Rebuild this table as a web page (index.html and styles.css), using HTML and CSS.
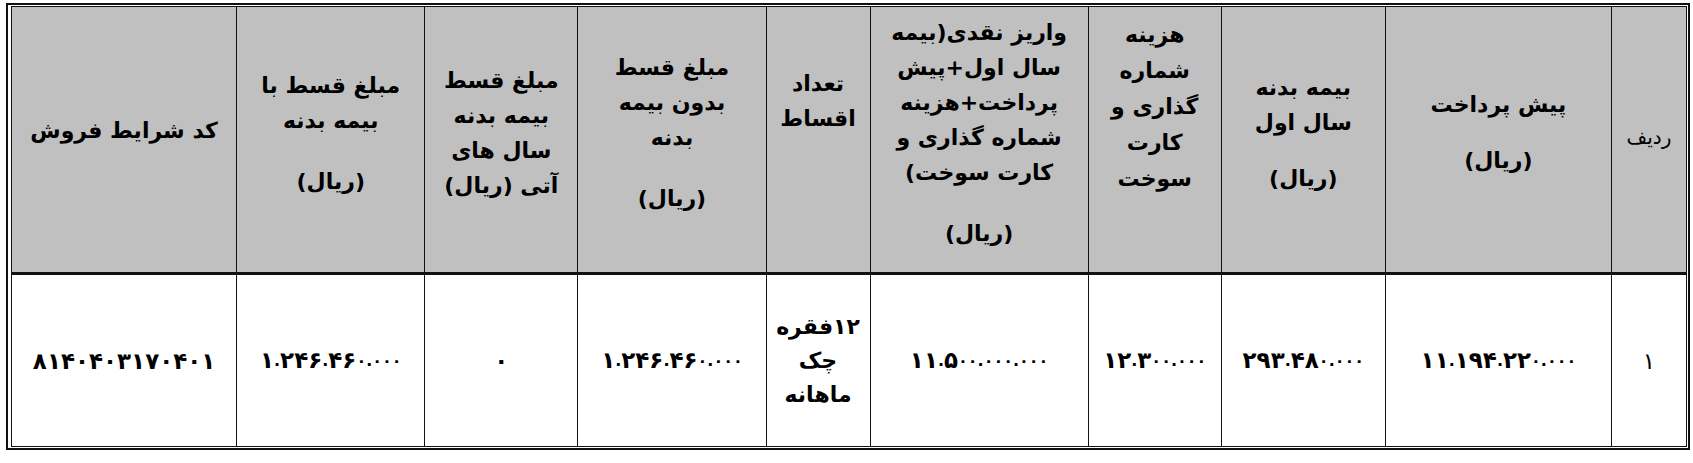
FILE: index.html
```html
<!DOCTYPE html>
<html lang="fa" dir="rtl">
<head>
<meta charset="utf-8">
<title>شرایط فروش</title>
<link rel="stylesheet" href="styles.css">
</head>
<body>
<div class="frame">
<table class="grid">
<colgroup>
<col class="w-radif"><col class="w-pish"><col class="w-bime"><col class="w-hazine"><col class="w-variz"><col class="w-tedad"><col class="w-bedun"><col class="w-ati"><col class="w-ba"><col class="w-kod">
</colgroup>
<tr class="head">
<td class="radif">ردیف</td>
<td class="pad-pish">پیش پرداخت<span class="unit unit-s">(ریال)</span></td>
<td>بیمه بدنه<br>سال اول<span class="unit unit-s">(ریال)</span></td>
<td class="pad-hazine">هزینه<br>شماره<br>گذاری و<br>کارت<br>سوخت</td>
<td>واریز نقدی(بیمه<br>سال اول+پیش<br>پرداخت+هزینه<br>شماره گذاری و<br>کارت سوخت)<span class="unit">(ریال)</span></td>
<td class="pad-tedad">تعداد<br>اقساط</td>
<td>مبلغ قسط<br>بدون بیمه<br>بدنه<span class="unit">(ریال)</span></td>
<td>مبلغ قسط<br>بیمه بدنه<br>سال های<br>آتی (ریال)</td>
<td>مبلغ قسط با<br>بیمه بدنه<span class="unit">(ریال)</span></td>
<td class="pad-kod">کد شرایط فروش</td>
</tr>
<tr class="body">
<td class="num-one">۱</td>
<td>۱۱<span class="n">.</span>۱۹۴<span class="n">.</span>۲۲<span class="n">۰.۰۰۰</span></td>
<td>۲۹۳<span class="n">.</span>۴۸<span class="n">۰.۰۰۰</span></td>
<td>۱۲<span class="n">.</span>۳<span class="n">۰۰.۰۰۰</span></td>
<td>۱۱<span class="n">.</span>۵<span class="n">۰۰.۰۰۰.۰۰۰</span></td>
<td class="multi">۱۲فقره<br>چک<br>ماهانه</td>
<td>۱<span class="n">.</span>۲۴۶<span class="n">.</span>۴۶<span class="n">۰.۰۰۰</span></td>
<td>۰</td>
<td>۱<span class="n">.</span>۲۴۶<span class="n">.</span>۴۶<span class="n">۰.۰۰۰</span></td>
<td>۸۱۴۰۴۰۳۱۷۰۴۰۱</td>
</tr>
</table>
</div>
</body>
</html>
```

FILE: styles.css
```css
html, body {
  margin: 0;
  padding: 0;
  background: #ffffff;
}
body {
  padding: 3px;
  font-family: "DejaVu Sans", sans-serif;
  color: #000;
}
.frame {
  width: 1678px;
  border: 2px solid #111;
  padding: 1px;
  background: #fff;
}
.grid {
  width: 1676px;
  border-collapse: collapse;
  table-layout: fixed;
  border: 1px solid #111;
}
.w-radif { width: 75px; }
.w-pish { width: 226px; }
.w-bime { width: 164px; }
.w-hazine { width: 133px; }
.w-variz { width: 218px; }
.w-tedad { width: 104px; }
.w-bedun { width: 188px; }
.w-ati { width: 153px; }
.w-ba { width: 188px; }
.w-kod { width: 225px; }
.grid td {
  border: 1px solid #111;
  text-align: center;
  vertical-align: middle;
  padding: 0;
  font-weight: bold;
  font-size: 22px;
  line-height: 35px;
}
.grid tr.head {
  height: 267px;
}
.head td {
  background: #c0c0c0;
  padding-bottom: 13px;
  border-bottom: 3px solid #111;
}
.head td.radif {
  font-weight: normal;
  font-size: 20px;
  padding-bottom: 4px;
}
.head td.pad-tedad {
  padding-bottom: 78px;
}
.head td.pad-hazine {
  padding-bottom: 65px;
  line-height: 36px;
}
.head td.pad-pish {
  padding-bottom: 15px;
}
.head td.pad-kod {
  padding-bottom: 19px;
}
.unit {
  display: block;
  margin-top: 26px;
}
.unit-s {
  margin-top: 21px;
}
.grid tr.body {
  height: 173px;
}
.body td {
  background: #fff;
  font-size: 23px;
  line-height: 34px;
}
.body td.multi {
  font-size: 22px;
}
.body td.num-one {
  font-weight: normal;
}
.n {
  font-size: 16px;
  vertical-align: 2px;
}
```
